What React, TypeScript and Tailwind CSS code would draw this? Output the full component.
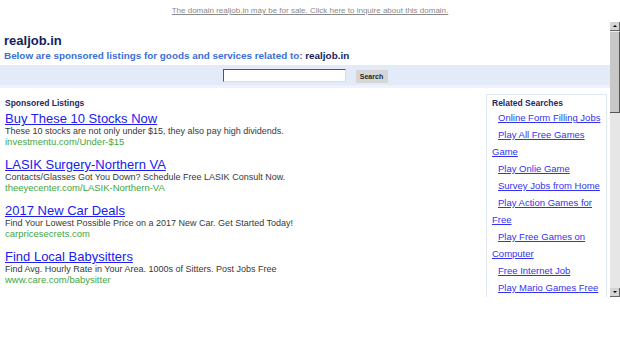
import React from 'react';

const ads = [
  {
    title: 'Buy These 10 Stocks Now',
    desc: 'These 10 stocks are not only under $15, they also pay high dividends.',
    url: 'investmentu.com/Under-$15',
  },
  {
    title: 'LASIK Surgery-Northern VA',
    desc: 'Contacts/Glasses Got You Down? Schedule Free LASIK Consult Now.',
    url: 'theeyecenter.com/LASIK-Northern-VA',
  },
  {
    title: '2017 New Car Deals',
    desc: 'Find Your Lowest Possible Price on a 2017 New Car. Get Started Today!',
    url: 'carpricesecrets.com',
  },
  {
    title: 'Find Local Babysitters',
    desc: 'Find Avg. Hourly Rate in Your Area. 1000s of Sitters. Post Jobs Free',
    url: 'www.care.com/babysitter',
  },
  {
    title: 'Download Software & Cloud Apps',
    desc: '',
    url: '',
  },
];

const related = [
  'Online Form Filling Jobs',
  'Play All Free Games Game',
  'Play Onlie Game',
  'Survey Jobs from Home',
  'Play Action Games for Free',
  'Play Free Games on Computer',
  'Free Internet Job',
  'Play Mario Games Free',
];

export default function App() {
  return (
    <div className="w-[620px] h-[343px] bg-white overflow-hidden font-['Liberation_Sans',Arial,sans-serif]">
      {/* domain for sale bar */}
      <div className="h-[22px] pt-[6px] text-center text-[8px] leading-[10px] text-[#8a8a8a]">
        <a className="underline">The domain realjob.in may be for sale. Click here to inquire about this domain.</a>
      </div>

      {/* frame */}
      <div className="flex h-[275px]">
        <div className="w-[610px] overflow-hidden">
          <div className="px-[4px] pt-[11px]">
            <h1 className="text-[13px] leading-[16px] font-bold text-[#141c5e]">realjob.in</h1>
            <p className="text-[9.9px] leading-[14px] font-bold text-[#3b6fd6]">
              Below are sponsored listings for goods and services related to:{' '}
              <span className="text-[#141c5e]">realjob.in</span>
            </p>
          </div>

          {/* search band */}
          <div className="mt-[2px] h-[23px] bg-[#e4ebf8] border-b-[3px] border-[#eef2fb] flex items-center justify-center gap-[10px]">
            <div className="w-[123px] h-[13px] bg-white border border-[#dcdcdc] border-t-[#555] border-l-[#555]" />
            <div className="w-[32px] h-[13px] mt-[2px] bg-[#d6d6d6] text-[7px] leading-[13px] font-bold text-[#222] text-center">
              Search
            </div>
          </div>

          <div className="flex pt-[6px]">
            {/* listings */}
            <div className="flex-1 pl-[5px] pt-[3px]">
              <div className="text-[8.5px] leading-[12px] font-bold text-[#262866]">Sponsored Listings</div>
              <div className="flex flex-col gap-[10px] pt-[2px]">
                {ads.map((ad) => (
                  <div key={ad.title}>
                    <a className="block text-[13px] leading-[15px] text-[#2020ee] underline">{ad.title}</a>
                    <div className="text-[9px] leading-[11px] text-[#383838]">{ad.desc}</div>
                    <div className="text-[9.5px] leading-[10px] text-[#3fa63f]">{ad.url}</div>
                  </div>
                ))}
              </div>
            </div>

            {/* related searches */}
            <div className="w-[121px] mr-[3px] border border-[#dfe7f5] px-[5px] pt-[2px]">
              <div className="text-[8.5px] leading-[12px] font-bold text-[#262866]">Related Searches</div>
              <div className="text-[9.5px] leading-[17px] text-[#3333ee]">
                {related.map((r) => (
                  <div key={r} className="indent-[6px]">
                    <a className="underline">{r}</a>
                  </div>
                ))}
              </div>
            </div>
          </div>
        </div>

        {/* scrollbar */}
        <div className="w-[10px] flex flex-col bg-[#e6e6e6]">
          <div className="h-[9px] bg-[#d4d4d4] border-r border-b border-[#666] flex items-center justify-center">
            <div className="w-0 h-0 border-l-[2px] border-r-[2px] border-b-[2px] border-l-transparent border-r-transparent border-b-black" />
          </div>
          <div className="h-[82px] bg-[#c8c8c8] border-r border-b border-[#555] border-t border-t-[#eee]" />
          <div className="flex-1" />
          <div className="h-[9px] bg-[#d4d4d4] border-r border-b border-[#666] flex items-center justify-center">
            <div className="w-0 h-0 border-l-[2px] border-r-[2px] border-t-[2px] border-l-transparent border-r-transparent border-t-black" />
          </div>
        </div>
      </div>
    </div>
  );
}
